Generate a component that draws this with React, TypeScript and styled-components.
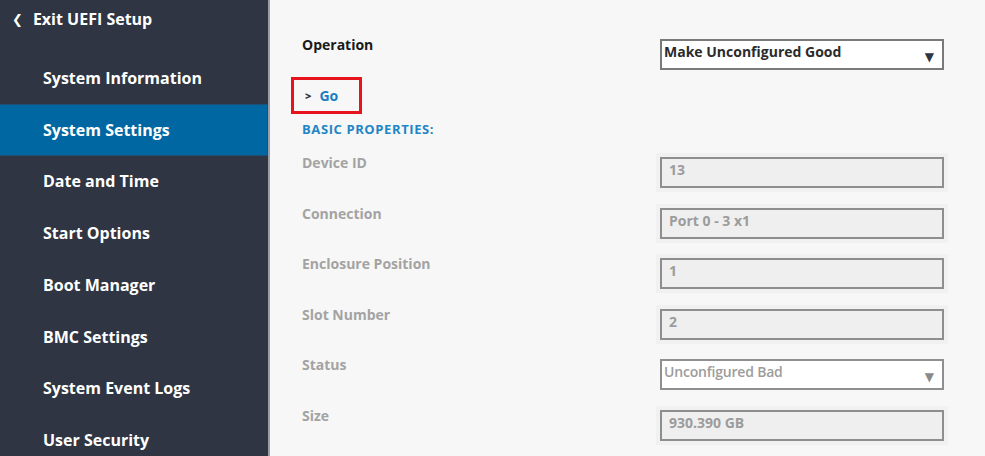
import styled, { createGlobalStyle } from "styled-components";

const GlobalStyle = createGlobalStyle`
  html, body {
    margin: 0;
    padding: 0;
    width: 985px;
    height: 456px;
    overflow: hidden;
    font-family: "Open Sans", "Noto Sans", "DejaVu Sans", sans-serif;
  }
`;

const menuItems = [
  "System Information",
  "System Settings",
  "Date and Time",
  "Start Options",
  "Boot Manager",
  "BMC Settings",
  "System Event Logs",
  "User Security",
];

const properties = [
  { label: "Device ID", value: "13" },
  { label: "Connection", value: "Port 0 - 3 x1" },
  { label: "Enclosure Position", value: "1" },
  { label: "Slot Number", value: "2" },
  { label: "Status", value: "Unconfigured Bad", select: true },
  { label: "Size", value: "930.390 GB" },
];

const App = () => {
  return (
    <Page>
      <GlobalStyle />
      <Sidebar>
        <ExitItem>
          <ExitChevron>❮</ExitChevron>
          Exit UEFI Setup
        </ExitItem>
        {menuItems.map((item) => (
          <MenuItem key={item} $active={item === "System Settings"}>
            {item}
          </MenuItem>
        ))}
      </Sidebar>
      <Divider />
      <Content>
        <Row>
          <OperationLabel>Operation</OperationLabel>
          <SelectBox>
            <SelectText>Make Unconfigured Good</SelectText>
            <Arrow $dark>▼</Arrow>
          </SelectBox>
        </Row>
        <GoButton>
          <GoChevron>&gt;</GoChevron>
          Go
        </GoButton>
        <SectionTitle>BASIC PROPERTIES:</SectionTitle>
        <PropList>
          {properties.map((p) => (
            <Row key={p.label}>
              <Label>{p.label}</Label>
              {p.select ? (
                <SelectBox $muted>
                  <StatusText>{p.value}</StatusText>
                  <Arrow>▼</Arrow>
                </SelectBox>
              ) : (
                <ReadOnlyField>{p.value}</ReadOnlyField>
              )}
            </Row>
          ))}
        </PropList>
      </Content>
    </Page>
  );
};

const Page = styled.div`
  display: flex;
  width: 985px;
  height: 456px;
  background: #f7f7f7;
  overflow: hidden;
`;

const Sidebar = styled.nav`
  width: 268px;
  flex-shrink: 0;
  background: #2f3542;
  display: flex;
  flex-direction: column;
`;

const ExitItem = styled.div`
  height: 52px;
  flex-shrink: 0;
  box-sizing: border-box;
  padding: 9px 0 0 12px;
  color: #ffffff;
  font-size: 16px;
  font-weight: 700;
  display: flex;
  align-items: flex-start;
  line-height: 20px;
`;

const ExitChevron = styled.span`
  font-size: 13px;
  margin-right: 10px;
  font-weight: 400;
`;

const MenuItem = styled.div<{ $active?: boolean }>`
  height: 51.75px;
  flex-shrink: 0;
  box-sizing: border-box;
  display: flex;
  align-items: center;
  padding-left: 43px;
  color: #ffffff;
  font-size: 16px;
  font-weight: 700;
  background: ${(p) => (p.$active ? "#0067a2" : "transparent")};
  border: 1px solid ${(p) => (p.$active ? "#1f4f73" : "transparent")};
  border-left: none;
`;

const Divider = styled.div`
  width: 2px;
  flex-shrink: 0;
  background: #9a9ea6;
`;

const Content = styled.main`
  flex: 1;
  padding: 39px 0 0 32px;
  display: flex;
  flex-direction: column;
`;

const Row = styled.div`
  display: grid;
  grid-template-columns: 358px 284px;
  align-items: start;
  height: 31px;
`;

const OperationLabel = styled.div`
  color: #1a1a1a;
  font-size: 14px;
  font-weight: 700;
  line-height: 20px;
  margin-top: -4px;
`;

const Label = styled.div`
  color: #a3a3a3;
  font-size: 14px;
  font-weight: 700;
  line-height: 20px;
  margin-top: -4px;
`;

const SelectBox = styled.div<{ $muted?: boolean }>`
  height: 31px;
  box-sizing: border-box;
  background: #ffffff;
  border: 2px solid ${(p) => (p.$muted ? "#8f8f8f" : "#7a7a7a")};
  display: flex;
  align-items: flex-start;
  justify-content: space-between;
  padding: 1px 8px 0 2px;
`;

const SelectText = styled.span`
  color: #2b2b2b;
  font-size: 14px;
  font-weight: 700;
  line-height: 20px;
`;

const StatusText = styled.span`
  color: #9c9c9c;
  font-size: 14px;
  font-weight: 600;
  line-height: 20px;
  letter-spacing: -0.2px;
`;

const Arrow = styled.span<{ $dark?: boolean }>`
  color: ${(p) => (p.$dark ? "#2f3542" : "#8a8a8a")};
  font-size: 12px;
  line-height: 12px;
  margin-top: 9px;
  font-family: "DejaVu Sans", sans-serif;
`;

const GoButton = styled.div`
  margin: 7px 0 0 -11px;
  width: 71px;
  height: 37px;
  box-sizing: border-box;
  border: 3px solid #e8141d;
  display: flex;
  align-items: center;
  padding-left: 11px;
  color: #1a7fc1;
  font-size: 14px;
  font-weight: 700;
`;

const GoChevron = styled.span`
  color: #333;
  font-size: 11px;
  font-weight: 800;
  margin-right: 8px;
`;

const SectionTitle = styled.div`
  margin-top: 6px;
  color: #1e86c6;
  font-size: 13px;
  font-weight: 700;
  line-height: 18px;
  letter-spacing: 0.6px;
`;

const PropList = styled.div`
  margin-top: 19px;
  display: flex;
  flex-direction: column;
  gap: 19.6px;
`;

const ReadOnlyField = styled.div`
  height: 31px;
  box-sizing: border-box;
  background: #efefef;
  border: 2px solid #8e8e8e;
  box-shadow: 0 0 0 4px #f1f1f1;
  padding: 1px 0 0 7px;
  color: #9c9c9c;
  font-size: 14px;
  font-weight: 700;
  line-height: 20px;
`;

export default App;
